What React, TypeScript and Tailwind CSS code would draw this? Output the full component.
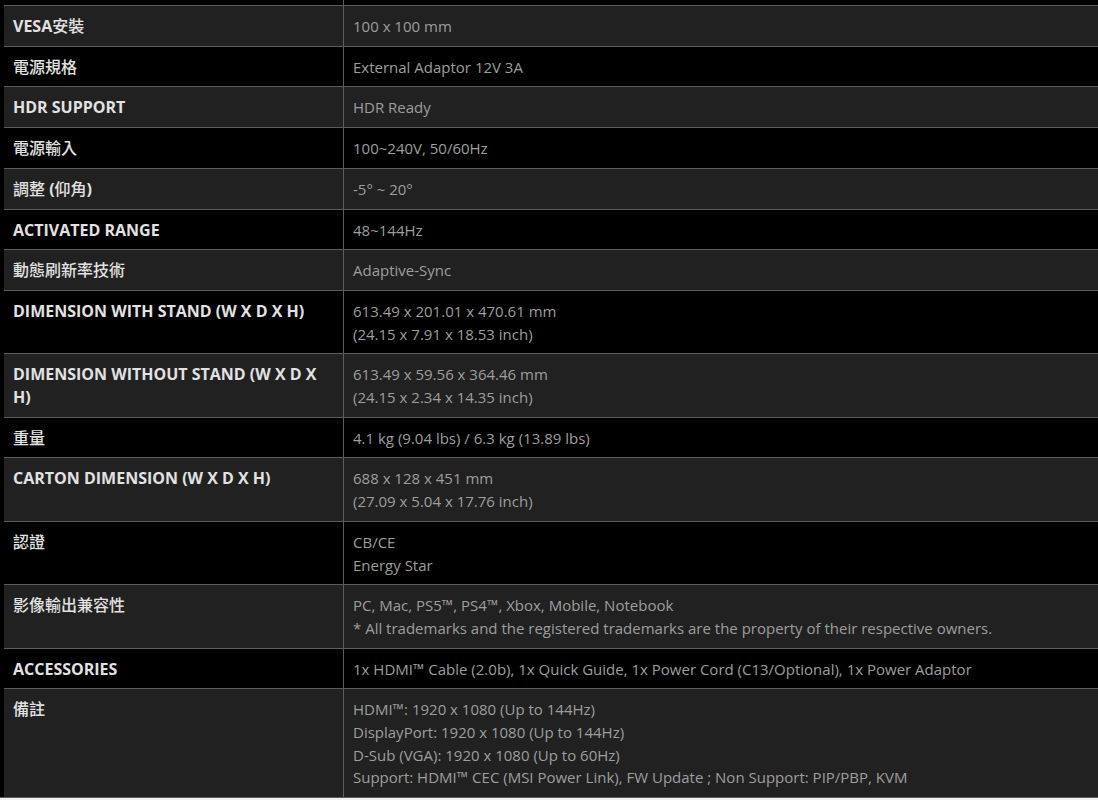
const specs: { label: string; value: string[] }[] = [
  { label: 'VESA安裝', value: ['100 x 100 mm'] },
  { label: '電源規格', value: ['External Adaptor 12V 3A'] },
  { label: 'HDR SUPPORT', value: ['HDR Ready'] },
  { label: '電源輸入', value: ['100~240V, 50/60Hz'] },
  { label: '調整 (仰角)', value: ['-5° ~ 20°'] },
  { label: 'ACTIVATED RANGE', value: ['48~144Hz'] },
  { label: '動態刷新率技術', value: ['Adaptive-Sync'] },
  {
    label: 'DIMENSION WITH STAND (W X D X H)',
    value: ['613.49 x 201.01 x 470.61 mm', '(24.15 x 7.91 x 18.53 inch)'],
  },
  {
    label: 'DIMENSION WITHOUT STAND (W X D X H)',
    value: ['613.49 x 59.56 x 364.46 mm', '(24.15 x 2.34 x 14.35 inch)'],
  },
  { label: '重量', value: ['4.1 kg (9.04 lbs) / 6.3 kg (13.89 lbs)'] },
  {
    label: 'CARTON DIMENSION (W X D X H)',
    value: ['688 x 128 x 451 mm', '(27.09 x 5.04 x 17.76 inch)'],
  },
  { label: '認證', value: ['CB/CE', 'Energy Star'] },
  {
    label: '影像輸出兼容性',
    value: [
      'PC, Mac, PS5™, PS4™, Xbox, Mobile, Notebook',
      '* All trademarks and the registered trademarks are the property of their respective owners.',
    ],
  },
  {
    label: 'ACCESSORIES',
    value: ['1x HDMI™ Cable (2.0b), 1x Quick Guide, 1x Power Cord (C13/Optional), 1x Power Adaptor'],
  },
  {
    label: '備註',
    value: [
      'HDMI™: 1920 x 1080 (Up to 144Hz)',
      'DisplayPort: 1920 x 1080 (Up to 144Hz)',
      'D-Sub (VGA): 1920 x 1080 (Up to 60Hz)',
      'Support: HDMI™ CEC (MSI Power Link), FW Update ; Non Support: PIP/PBP, KVM',
    ],
  },
];

// latin runs in bold, CJK runs in a lighter weight
const Label = ({ text }: { text: string }) => {
  const parts = text.split(/([\u4e00-\u9fff]+)/).filter(Boolean);
  return (
    <>
      {parts.map((p, i) =>
        /[\u4e00-\u9fff]/.test(p) ? (
          <span key={i} className="font-medium">
            {p}
          </span>
        ) : (
          <span key={i} className="font-bold">
            {p}
          </span>
        )
      )}
    </>
  );
};

export default function App() {
  return (
    <div
      className="w-[1098px] h-[800px] overflow-hidden bg-black pl-[4px] text-[15px] leading-[22.7px]"
      style={{ fontFamily: '"Open Sans", "Noto Sans CJK TC", sans-serif' }}
    >
      {/* sliver of the previous row */}
      <div className="grid grid-cols-[340px_1fr] h-[5px]">
        <div className="border-r border-[#5c5c5c]" />
        <div />
      </div>

      {specs.map((row, i) => (
        <div
          key={row.label}
          className={`grid grid-cols-[340px_1fr] border-t border-[#5c5c5c] ${
            i % 2 === 0 ? 'bg-[#212121]' : 'bg-black'
          }`}
        >
          <div className="border-r border-[#5c5c5c] pl-[9px] pr-[24px] pt-[9px] pb-[8px] text-[16px] text-[#e2e2e2]">
            <Label text={row.label} />
          </div>
          <div className="pl-[9px] pr-3 pt-[9px] pb-[8px] text-[#9e9e9e]">
            {row.value.map((v) => (
              <div key={v}>{v}</div>
            ))}
          </div>
        </div>
      ))}
      <div className="border-t border-[#5c5c5c] h-[10px] bg-[#f2f2f2] -ml-[4px]" />
    </div>
  );
}
